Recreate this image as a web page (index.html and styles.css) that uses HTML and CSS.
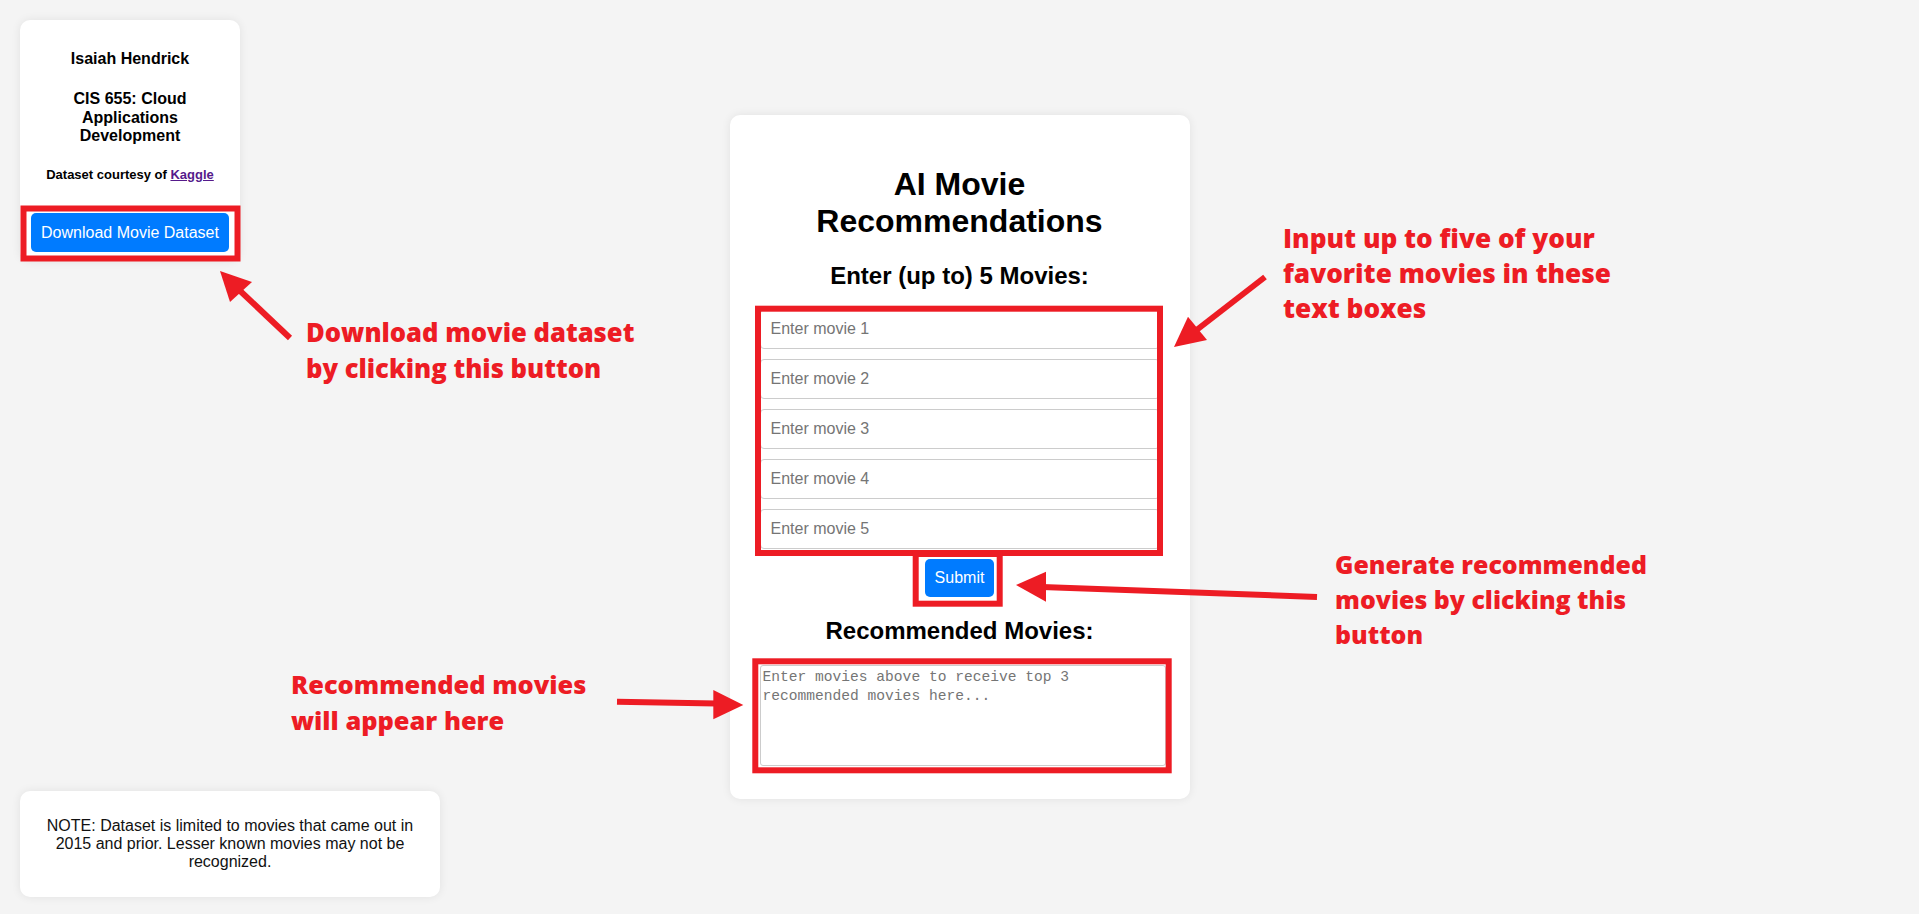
FILE: index.html
```html
<!DOCTYPE html>
<html lang="en">
<head>
  <meta charset="UTF-8">
  <title>AI Movie Recommendations</title>
  <link rel="stylesheet" href="styles.css">
</head>
<body>

<div class="page">
  <aside class="sidebar">
    <div class="info-card">
      <p class="info-name">Isaiah Hendrick</p>
      <p class="info-course">CIS 655: Cloud Applications Development</p>
      <p class="info-credit">Dataset courtesy of <a href="#" class="visited-link">Kaggle</a></p>
      <button type="button" class="download-btn">Download Movie Dataset</button>
    </div>

    <div class="note-card">
      NOTE: Dataset is limited to movies that came out in 2015 and prior. Lesser known movies may not be recognized.
    </div>
  </aside>

  <main class="container">
    <h1>AI Movie Recommendations</h1>

    <h2>Enter (up to) 5 Movies:</h2>
    <form id="movieForm" onsubmit="return false">
      <input type="text" name="movie1" placeholder="Enter movie 1">
      <input type="text" name="movie2" placeholder="Enter movie 2">
      <input type="text" name="movie3" placeholder="Enter movie 3">
      <input type="text" name="movie4" placeholder="Enter movie 4">
      <input type="text" name="movie5" placeholder="Enter movie 5">
      <button type="submit" class="submit-btn">Submit</button>
    </form>

    <h2>Recommended Movies:</h2>
    <textarea id="results" readonly placeholder="Enter movies above to receive top 3 recommended movies here..."></textarea>
  </main>

  <div class="spacer"></div>
</div>

<!-- annotation layer drawn over the screenshot -->
<svg class="marks" viewBox="0 0 1919 914" width="1919" height="914">
  <g fill="none" stroke="#ed1c24" stroke-width="6">
    <rect x="23.5" y="208.5" width="214" height="50"/>
    <rect x="758" y="308.7" width="402" height="244.3"/>
    <rect x="915.7" y="554" width="84" height="49.7"/>
    <rect x="755.3" y="661.3" width="413.4" height="109"/>
  </g>
  <g stroke="#ed1c24" stroke-width="6" stroke-linecap="butt">
    <line x1="290" y1="338" x2="236" y2="287"/>
    <line x1="1265" y1="277" x2="1194" y2="332"/>
    <line x1="1317" y1="597" x2="1042" y2="587"/>
    <line x1="617" y1="701.7" x2="716" y2="703.5"/>
  </g>
  <g fill="#ed1c24">
    <polygon points="220,271 252,282 230,302"/>
    <polygon points="1174,347 1188,316.7 1207,340"/>
    <polygon points="1016,585 1046,571.7 1046,601.7"/>
    <polygon points="743.3,705 713.3,690 713.3,719.3"/>
  </g>
</svg>

<div class="note-text note-download">Download movie dataset<br>by clicking this button</div>
<div class="note-text note-inputs">Input up to five of your<br>favorite movies in these<br>text boxes</div>
<div class="note-text note-submit">Generate recommended<br>movies by clicking this<br>button</div>
<div class="note-text note-results">Recommended movies<br>will appear here</div>

</body>
</html>
```

FILE: styles.css
```css
body {
  margin: 0;
  font-family: "Liberation Sans", Arial, sans-serif;
  background-color: #f4f4f4;
  color: #000;
}
.page {
  display: grid;
  grid-template-columns: 1fr auto 1fr;
  height: 100vh;
}
.sidebar {
  display: flex;
  flex-direction: column;
  justify-content: space-between;
  align-items: flex-start;
  padding: 20px 20px 17px;
}
.info-card {
  width: 198px;
  padding: 20px 11px 9px;
  background-color: white;
  border-radius: 10px;
  box-shadow: 0 0 10px rgba(0, 0, 0, 0.08);
  text-align: center;
}
.info-name, .info-course {
  font-size: 16px;
  font-weight: bold;
  line-height: 18.4px;
}
.info-name {
  margin: 10px 0 0;
}
.info-course {
  margin: 22px 0 0;
}
.info-credit {
  font-size: 13px;
  font-weight: bold;
  line-height: 15px;
  margin: 21px 0 0;
}
.visited-link {
  color: #551a8b;
}
.download-btn {
  display: block;
  width: 100%;
  margin-top: 31px;
  padding: 10px;
  font-family: "Liberation Sans", Arial, sans-serif;
  font-size: 16px;
  line-height: 19px;
  background-color: #007bff;
  color: white;
  border: none;
  border-radius: 5px;
  cursor: pointer;
}
.note-card {
  width: 380px;
  padding: 26px 20px;
  background-color: white;
  border-radius: 10px;
  box-shadow: 0 0 10px rgba(0, 0, 0, 0.08);
  text-align: center;
  font-size: 16px;
  line-height: 18px;
  color: #111;
}
.container {
  align-self: center;
  width: 400px;
  padding: 30px 30px 33px;
  background-color: white;
  border-radius: 10px;
  box-shadow: 0 0 10px rgba(0, 0, 0, 0.08);
  text-align: center;
}
h1 {
  font-size: 32px;
  margin: 21.44px 0;
}
h2 {
  font-size: 24px;
  margin: 19.92px 0;
}
input {
  display: block;
  width: 100%;
  height: 40px;
  box-sizing: border-box;
  margin: 0 0 10px;
  padding: 10px;
  font-family: "Liberation Sans", Arial, sans-serif;
  font-size: 16px;
  border: 1px solid #ccc;
  border-radius: 4px;
}
input::placeholder {
  color: #757575;
}
.submit-btn {
  display: block;
  margin: 0 auto;
  padding: 10px;
  font-family: "Liberation Sans", Arial, sans-serif;
  font-size: 16px;
  line-height: 18px;
  background-color: #007bff;
  color: white;
  border: none;
  border-radius: 5px;
  cursor: pointer;
}
textarea {
  display: block;
  width: 100%;
  height: 95px;
  margin: 0;
  padding: 2px;
  font-family: "Liberation Mono", monospace;
  font-size: 14.6px;
  line-height: 19px;
  border: 1px solid #ccc;
  border-radius: 3px;
  resize: none;
}
textarea::placeholder {
  color: #757575;
}

/* annotations */
.marks {
  position: absolute;
  top: 0;
  left: 0;
  pointer-events: none;
}
.note-text {
  position: absolute;
  font-family: "Open Sans", sans-serif;
  font-weight: 800;
  font-size: 25.6px;
  color: #ed1c24;
  white-space: nowrap;
}
.note-download {
  left: 306px;
  top: 314.5px;
  line-height: 36.7px;
}
.note-inputs {
  left: 1283px;
  top: 220.5px;
  font-size: 26.2px;
  line-height: 35px;
}
.note-submit {
  left: 1335px;
  top: 546.5px;
  font-size: 24.9px;
  line-height: 35px;
}
.note-results {
  left: 291px;
  top: 665.5px;
  font-size: 25.4px;
  line-height: 36.7px;
}
```
